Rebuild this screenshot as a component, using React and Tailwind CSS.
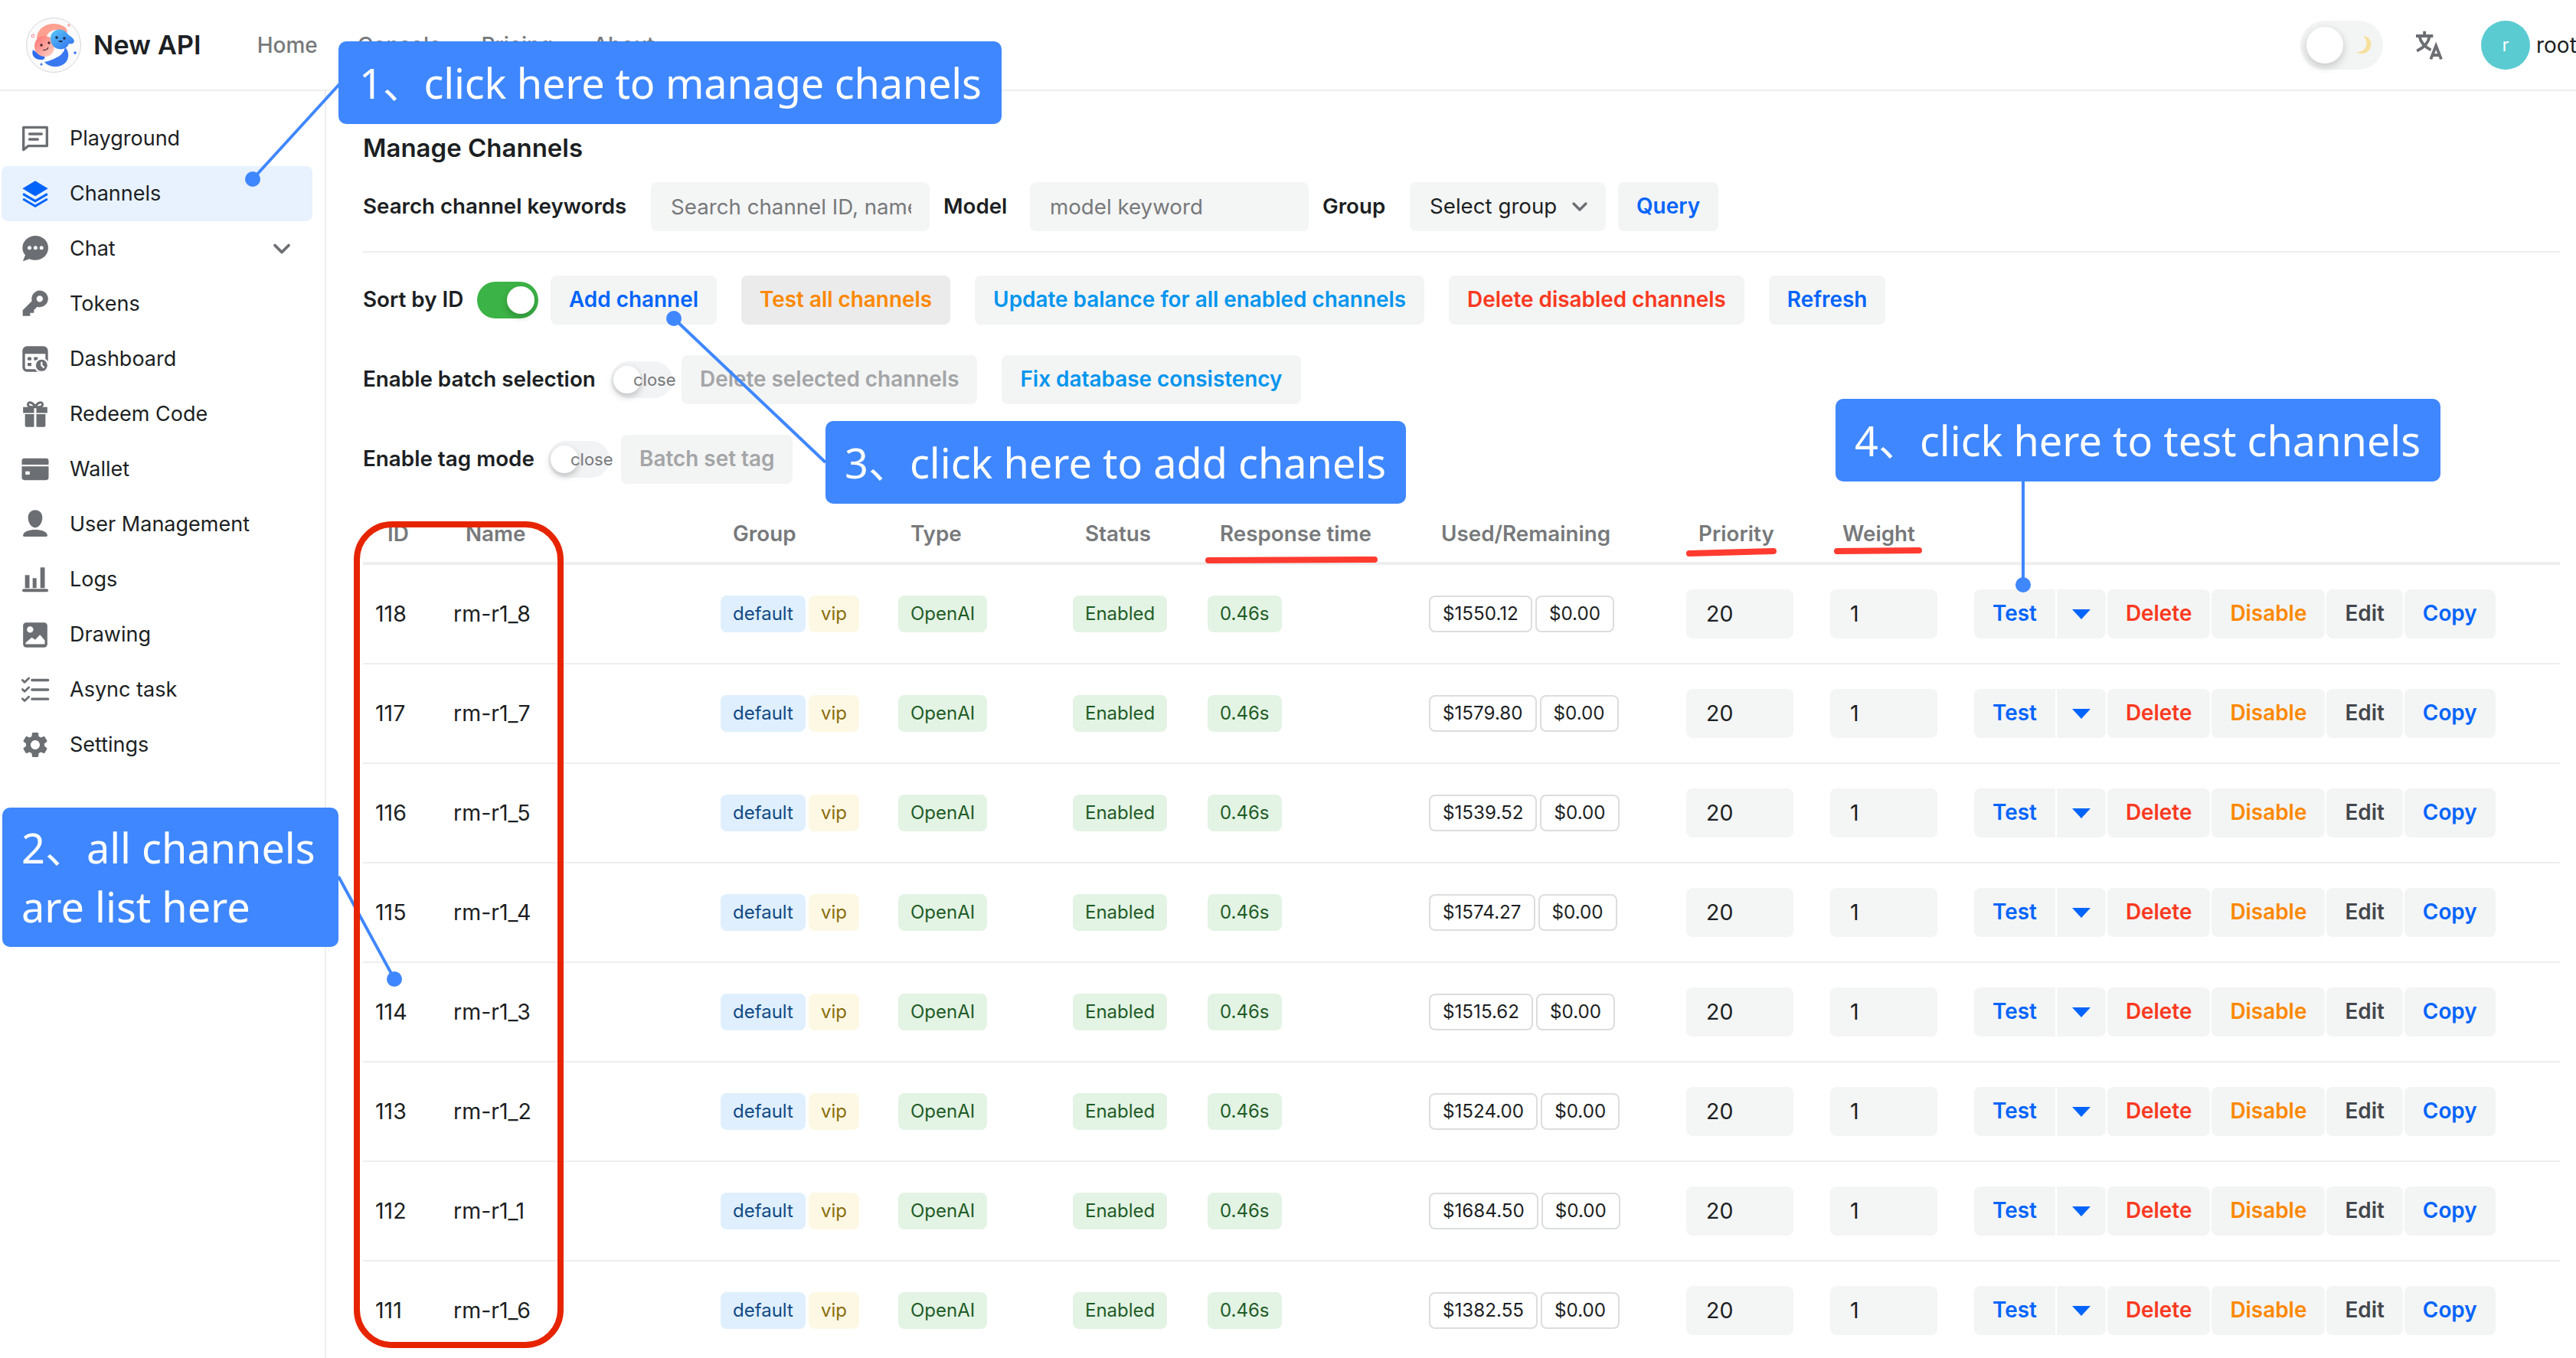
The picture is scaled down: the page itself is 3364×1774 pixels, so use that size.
import { ChevronDown } from 'lucide-react'
import { MdSettings } from 'react-icons/md'

const channels = [
  { id: 118, name: 'rm-r1_8', used: '$1550.12' },
  { id: 117, name: 'rm-r1_7', used: '$1579.80' },
  { id: 116, name: 'rm-r1_5', used: '$1539.52' },
  { id: 115, name: 'rm-r1_4', used: '$1574.27' },
  { id: 114, name: 'rm-r1_3', used: '$1515.62' },
  { id: 113, name: 'rm-r1_2', used: '$1524.00' },
  { id: 112, name: 'rm-r1_1', used: '$1684.50' },
  { id: 111, name: 'rm-r1_6', used: '$1382.55' },
]

const Svg = ({ children }) => (
  <svg viewBox="0 0 24 24" className="h-10 w-10 shrink-0 text-[#6b6e72]" fill="currentColor">
    {children}
  </svg>
)

const menu = [
  {
    label: 'Playground',
    icon: (
      <Svg>
        <path d="M2.800 3.200h18.400v14.600H6.400l-3.600 3z" fill="none" stroke="currentColor" strokeWidth="2" strokeLinejoin="round" />
        <path d="M7.500 8.400h9.500M7.500 12.600h6.500" fill="none" stroke="currentColor" strokeWidth="2" strokeLinecap="round" />
      </Svg>
    ),
  },
  {
    label: 'Channels',
    active: true,
    icon: (
      <svg viewBox="0 0 24 24" className="h-10 w-10 shrink-0 text-[#0064fa]" fill="currentColor">
        <path d="M12 2 22 8 12 14 2 8z" />
        <path d="M2.500 12.200 12 17.800l9.500-5.600M2.500 16.200 12 21.800l9.500-5.600" fill="none" stroke="currentColor" strokeWidth="1.800" />
      </svg>
    ),
  },
  {
    label: 'Chat',
    chevron: true,
    icon: (
      <Svg>
        <path d="M12.200 1.800C6.600 1.800 2 6 2 11.200c0 2.200.8 4.200 2.200 5.800L2.300 21.800l5.200-1.800c1.400.6 3 .9 4.700.9 5.600 0 10-4.200 10-9.600S17.800 1.800 12.200 1.800z" />
        <circle cx="7.500" cy="11.200" r="1.500" fill="#fff" />
        <circle cx="12.200" cy="11.200" r="1.500" fill="#fff" />
        <circle cx="16.900" cy="11.200" r="1.500" fill="#fff" />
      </Svg>
    ),
  },
  {
    label: 'Tokens',
    icon: (
      <Svg>
        <path
          fillRule="evenodd"
          d="M15.500 1.500a6.500 6.500 0 1 1-1.900 12.700L11 16.800V19H8v2.500H2.200V17l7.200-7.200A6.500 6.500 0 0 1 15.500 1.500zm0 4a2.500 2.500 0 1 0 0 5 2.500 2.500 0 0 0 0-5z"
        />
      </Svg>
    ),
  },
  {
    label: 'Dashboard',
    icon: (
      <Svg>
        <rect x="3" y="3" width="18" height="18" rx="2.500" fill="none" stroke="currentColor" strokeWidth="2" />
        <path d="M3 4.500A2.500 2.500 0 0 1 5 3h14a2.500 2.500 0 0 1 2 1.500V8H3z" />
        <rect x="6" y="10.500" width="3" height="2.500" rx=".5" />
        <rect x="11" y="10.500" width="3" height="2.500" rx=".5" />
        <rect x="6" y="15" width="3" height="2.500" rx=".5" />
        <circle cx="17" cy="17" r="5.200" stroke="#fff" strokeWidth="1.400" />
        <path d="M17 14.200V17l2 1.800" fill="none" stroke="#fff" strokeWidth="1.300" />
      </Svg>
    ),
  },
  {
    label: 'Redeem Code',
    icon: (
      <Svg>
        <path d="M12 6.500C10.500 2.500 6.300 1.800 6.300 4.300S9.500 6.500 12 6.500zM12 6.500c1.500-4 5.700-4.700 5.700-2.200S14.500 6.500 12 6.500z" fill="none" stroke="currentColor" strokeWidth="1.800" />
        <path d="M2.500 6.500h8.600v4.600H2.500zM12.900 6.500h8.600v4.600h-8.600zM4 12h7.100v10H5a1 1 0 0 1-1-1zM12.900 12H20v9a1 1 0 0 1-1 1h-6.100z" />
      </Svg>
    ),
  },
  {
    label: 'Wallet',
    icon: (
      <Svg>
        <path d="M1.500 8.400V5.500a2 2 0 0 1 2-2h17a2 2 0 0 1 2 2v2.900z" />
        <path fillRule="evenodd" d="M1.500 9.700h21V18.500a2 2 0 0 1-2 2h-17a2 2 0 0 1-2-2zM4.300 13.600v2.600h3.400v-2.600z" />
      </Svg>
    ),
  },
  {
    label: 'User Management',
    icon: (
      <Svg>
        <path d="M12 .8c3.400 0 5.600 2.600 5.600 6 0 3.700-2.300 7.800-5.600 7.800S6.400 10.500 6.400 6.800c0-3.400 2.200-6 5.600-6z" />
        <path d="M2.500 20.200c.6-2.500 4.400-4 9.500-4s8.900 1.500 9.500 4c.2.900-.4 1.400-1.200 1.400H3.700c-.8 0-1.400-.5-1.200-1.400z" />
      </Svg>
    ),
  },
  {
    label: 'Logs',
    icon: (
      <Svg>
        <path d="M4 8.500h3.500v10.300H4zM10 11h3v7.800h-3zM16 2.500h3.500v16.300H16z" />
        <rect x="1.800" y="19.300" width="20.400" height="2.400" rx="1.200" />
      </Svg>
    ),
  },
  {
    label: 'Drawing',
    icon: (
      <Svg>
        <rect x="2.500" y="2.500" width="19" height="19.500" rx="2.500" />
        <circle cx="8" cy="8" r="2.500" fill="#fff" />
        <path d="M4.500 19.500v-1.200l4.800-4 2.700 1.800 3.700-4 3.800 4.400v3z" fill="#fff" />
      </Svg>
    ),
  },
  {
    label: 'Async task',
    icon: (
      <Svg>
        <path
          d="M2 4.500l1.700 1.700L7 3M2 11.700l1.700 1.700L7 10.200M2 19l1.700 1.700L7 17.500"
          fill="none"
          stroke="currentColor"
          strokeWidth="1.700"
          strokeLinecap="round"
          strokeLinejoin="round"
        />
        <path d="M9.500 4.500h12.500M9.500 12h12.500M9.500 19.300h12.500" fill="none" stroke="currentColor" strokeWidth="2" strokeLinecap="round" />
      </Svg>
    ),
  },
  {
    label: 'Settings',
    icon: <MdSettings className="h-10 w-10 shrink-0 text-[#6b6e72]" />,
  },
]

function Logo() {
  return (
    <svg viewBox="0 0 72 72" className="h-[72px] w-[72px] shrink-0">
      <defs>
        <linearGradient id="pinkFace" x1="0" y1="0" x2="1" y2="1">
          <stop offset="0" stopColor="#ff6f6f" />
          <stop offset="1" stopColor="#ffd5c8" />
        </linearGradient>
        <linearGradient id="blueFace" x1="0" y1="0" x2="1" y2="1">
          <stop offset="0" stopColor="#59c8f7" />
          <stop offset="1" stopColor="#2f6df0" />
        </linearGradient>
      </defs>
      <circle cx="36" cy="36" r="35.500" fill="#fbfbfc" stroke="#c9cbcf" strokeWidth="0.800" />
      <path d="M14 28C14 10 36 3 50 12c3 2 5 6 3 8-8-6-22-6-26 4z" fill="#ffa090" />
      <path d="M9 42c-3 8 4 14 12 13 5 0 4-7 1-8-5 1-9-2-13-5z" fill="#2f6df0" />
      <path d="M24 58c8 9 25 8 30-3 3-7 0-14-3-16-2 6-8 15-27 19z" fill="#3a78f0" />
      <path d="M26 50c8 6 20 2 24-8-3-3-20 2-24 8z" fill="#ffffff" />
      <path d="M11 38c0-9 6-14 13-14 8 0 13 5 13 13 0 9-5 14-12 14S11 46 11 38z" fill="url(#pinkFace)" />
      <path d="M32 27c0-8 8-13 15-11 5 1 7 5 9 7 3 2 9 6 6 10-2 2-5 1-6 1-2 6-8 8-13 7-7-1-11-7-11-14z" fill="url(#blueFace)" />
      <circle cx="40" cy="26" r="1.800" fill="#1f2a44" />
      <circle cx="50" cy="27" r="1.800" fill="#1f2a44" />
      <path d="M42 30c2 3 5 3 6 0z" fill="#1f2a44" />
      <circle cx="20" cy="36" r="1.700" fill="#4a2430" />
      <circle cx="30" cy="33" r="1.700" fill="#4a2430" />
      <path d="M22 42c3 1 6 0 7-3" fill="none" stroke="#4a2430" strokeWidth="1.200" />
      <circle cx="9" cy="24" r="1.800" fill="none" stroke="#f59aa0" strokeWidth="1.200" />
      <circle cx="56" cy="10" r="1.800" fill="#f5a9a9" />
      <circle cx="64" cy="46" r="1.800" fill="#3f74ea" />
      <circle cx="20" cy="61" r="1.500" fill="#3f74ea" />
    </svg>
  )
}

function Switch({ on, label, className = '' }) {
  return (
    <div
      className={`relative h-12 w-20 shrink-0 rounded-full ${on ? 'bg-[#3bb346]' : 'bg-[#f2f3f4]'} ${className}`}
    >
      <span
        className={`absolute top-1.5 h-9 w-9 rounded-full bg-white shadow-[0_4px_10px_rgba(0,0,0,0.22)] ${on ? 'left-[39px]' : 'left-[3px]'}`}
      />
      {label && (
        <span className="absolute left-[29px] top-0 text-[22px] leading-[48px] text-[#77797b]">{label}</span>
      )}
    </div>
  )
}

function Btn({ color, bg = 'bg-[#f3f4f4]', children, className = '' }) {
  return (
    <button className={`flex h-16 shrink-0 items-center rounded-lg px-6 text-[27.9px] font-semibold ${bg} ${color} ${className}`}>
      {children}
    </button>
  )
}

function Tag({ className, children }) {
  return (
    <span className={`flex h-12 items-center rounded-lg px-4 text-[24px] ${className}`}>{children}</span>
  )
}

function Amount({ children }) {
  return (
    <span className="flex h-12 items-center rounded-lg border-2 border-[#dcdddd] bg-white px-4 text-[24.2px] text-[#1c1f23]">
      {children}
    </span>
  )
}

const columns = 'grid grid-cols-[102px_349px_232px_228px_176px_289px_336px_188px_188px_1fr] items-center'

function Row({ row }) {
  return (
    <div className={`${columns} h-[130px] border-b-2 border-[#eeeeef] pl-4 text-[28.5px] text-[#1c1f23]`}>
      <span>{row.id}</span>
      <span>{row.name}</span>
      <div className="flex gap-1">
        <Tag className="bg-[#dfeffd] text-[#124a84]">default</Tag>
        <Tag className="bg-[#fdf8e4] text-[#8a6d0b]">vip</Tag>
      </div>
      <div className="flex">
        <Tag className="bg-[#e3f3e4] text-[#1f5c27]">OpenAI</Tag>
      </div>
      <div className="flex">
        <Tag className="bg-[#e3f3e4] text-[#1f5c27]">Enabled</Tag>
      </div>
      <div className="flex">
        <Tag className="bg-[#e3f3e4] text-[#1f5c27]">0.46s</Tag>
      </div>
      <div className="flex gap-1">
        <Amount>{row.used}</Amount>
        <Amount>$0.00</Amount>
      </div>
      <div className="flex h-16 w-[140px] items-center rounded-lg bg-[#f4f5f5] pl-[26px]">20</div>
      <div className="flex h-16 w-[140px] items-center rounded-lg bg-[#f4f5f5] pl-[26px]">1</div>
      <div className="flex gap-0.5">
        <Btn color="text-[#0064fa]" className="rounded-r-none">Test</Btn>
        <button className="flex h-16 w-16 items-center justify-center rounded-r-lg bg-[#f3f4f4]">
          <span className="h-0 w-0 border-x-[12px] border-t-[13px] border-x-transparent border-t-[#0064fa]" />
        </button>
        <Btn color="text-[#f93920]">Delete</Btn>
        <Btn color="text-[#fc8800]">Disable</Btn>
        <Btn color="text-[#43474c]">Edit</Btn>
        <Btn color="text-[#0064fa]">Copy</Btn>
      </div>
    </div>
  )
}

function Callout({ className, children }) {
  return (
    <div
      className={`absolute flex items-center whitespace-nowrap rounded-[10px] bg-[#3f87ff] text-[54px] leading-[77px] text-white font-['Noto_Sans','Noto_Sans_CJK_SC',sans-serif] ${className}`}
    >
      {children}
    </div>
  )
}

export default function App() {
  return (
    <div className="relative h-[1774px] w-[3364px] overflow-hidden bg-white text-[#1c1f23] font-['Inter',sans-serif]">
      {/* top bar */}
      <header className="flex h-[119px] items-center border-b-2 border-[#eeeeef] pl-[34px]">
        <Logo />
        <span className="ml-[16px] text-[34.5px] font-semibold">New API</span>
        <nav className="ml-[73px] flex gap-[52px] text-[28px] font-medium text-[#77797b]">
          <span>Home</span>
          <span>Console</span>
          <span>Pricing</span>
          <span>About</span>
        </nav>
        <div className="ml-auto flex items-center">
          <div className="relative h-16 w-[108px] rounded-full bg-[#f3f4f4]">
            <span className="absolute left-2 top-2 h-12 w-12 rounded-full bg-white shadow-[0_4px_12px_rgba(0,0,0,0.2)]" />
            <svg viewBox="0 0 24 24" className="absolute left-[66px] top-[18px] h-7 w-7">
              <path d="M14 1.500c7 1 10 7.500 8 13-2.200 6-9.500 9-16 5.500 6.500 0 11-3.500 11.500-9 .3-3.500-1.500-7-3.500-9.500z" fill="#f6e09c" />
            </svg>
          </div>
          <svg viewBox="0 0 24 24" className="ml-[40px] h-10 w-10 text-[#6b6e72]" fill="none" stroke="currentColor">
            <path d="M8.500 1v3.800M1.800 4.800h13.400" strokeWidth="2.300" />
            <path d="M4.500 5c1 5 4.500 8.500 9 10.800M12.500 5c-1 5-4.500 9-10 11.500" strokeWidth="2.300" />
            <path d="M13.400 23l4.100-10.500L21.600 23M14.800 19.800h5.400" strokeWidth="2.300" />
          </svg>
          <div className="ml-[48px] flex h-16 w-16 items-center justify-center rounded-full bg-[#5bcbd2] text-[24px] text-white">
            r
          </div>
          <span className="ml-2 w-[52px] overflow-hidden whitespace-nowrap text-[28px]">root</span>
        </div>
      </header>

      <div className="flex">
        {/* sidebar */}
        <aside className="h-[1655px] w-[426px] shrink-0 border-r-2 border-[#eeeeef] pl-0.5 pt-[26px]">
          {menu.map((item) => (
            <div
              key={item.label}
              className={`flex h-[72px] w-[406px] items-center rounded-lg pl-6 text-[27px] ${item.active ? 'bg-[#e8f2fe]' : ''}`}
            >
              {item.icon}
              <span className="ml-[25px] flex-1">{item.label}</span>
              {item.chevron && <ChevronDown className="mr-[22px] h-9 w-9 text-[#6b6e72]" strokeWidth={2.5} />}
            </div>
          ))}
        </aside>

        {/* content */}
        <main className="min-w-0 flex-1 pl-[48px] pr-[21px] pt-[52px]">
          <h1 className="h-11 text-[33px] font-semibold leading-[44px]">Manage Channels</h1>

          <div className="mt-[23px] flex h-16 items-center text-[27.7px]">
            <span className="w-[376px] shrink-0 font-semibold">Search channel keywords</span>
            <input
              readOnly
              placeholder="Search channel ID, name"
              className="h-16 w-[364px] rounded-lg bg-[#f4f5f5] pl-[26px] pr-[24px] placeholder:text-[#77797b]"
            />
            <span className="ml-[18px] w-[113px] shrink-0 font-semibold">Model</span>
            <input
              readOnly
              placeholder="model keyword"
              className="h-16 w-[364px] rounded-lg bg-[#f4f5f5] pl-[26px] pr-6 placeholder:text-[#77797b]"
            />
            <span className="ml-[18px] w-[114px] shrink-0 font-semibold">Group</span>
            <div className="flex h-16 w-[256px] items-center justify-between rounded-lg bg-[#f4f5f5] pl-[26px] pr-[18px]">
              Select group
              <ChevronDown className="h-8 w-8 text-[#6b6e72]" strokeWidth={2.5} />
            </div>
            <Btn color="text-[#0064fa]" className="ml-4">Query</Btn>
          </div>

          <div className="mt-[26px] h-0.5 bg-[#eeeeef]" />

          <div className="mt-[30px] flex h-16 items-center text-[27.8px]">
            <span className="w-[149px] shrink-0 font-semibold">Sort by ID</span>
            <Switch on />
            <Btn color="text-[#0064fa]" className="ml-4">Add channel</Btn>
            <Btn color="text-[#fc8800]" bg="bg-[#ebebeb]" className="ml-8">Test all channels</Btn>
            <Btn color="text-[#0095ee]" className="ml-8">Update balance for all enabled channels</Btn>
            <Btn color="text-[#f93920]" className="ml-8">Delete disabled channels</Btn>
            <Btn color="text-[#0064fa]" className="ml-8">Refresh</Btn>
          </div>

          <div className="mt-10 flex h-16 items-center text-[27.8px]">
            <span className="w-[324px] shrink-0 font-semibold">Enable batch selection</span>
            <Switch label="close" />
            <Btn color="text-[#a4a5a7]" className="ml-[12px]">Delete selected channels</Btn>
            <Btn color="text-[#0095ee]" className="ml-8">Fix database consistency</Btn>
          </div>

          <div className="mt-10 flex h-16 items-center text-[27.8px]">
            <span className="w-[242px] shrink-0 font-semibold">Enable tag mode</span>
            <Switch label="close" />
            <Btn color="text-[#a4a5a7]" className="ml-[15px]">Batch set tag</Btn>
          </div>

          {/* table */}
          <div className={`${columns} h-[106px] border-b-4 border-[#eeeeef] pb-[20px] pl-8 pt-[45px] text-[27.8px] font-semibold text-[#77797b]`}>
            <span>ID</span>
            <span>Name</span>
            <span>Group</span>
            <span>Type</span>
            <span>Status</span>
            <span>Response time</span>
            <span>Used/Remaining</span>
            <span>Priority</span>
            <span>Weight</span>
            <span />
          </div>
          {channels.map((row) => (
            <Row key={row.id} row={row} />
          ))}
        </main>
      </div>

      {/* annotations drawn over the page */}
      <svg viewBox="0 0 3364 1774" className="pointer-events-none absolute inset-0 h-full w-full">
        <g stroke="#3f87ff" strokeWidth="4" fill="#3f87ff">
          <line x1="445" y1="108" x2="330" y2="234" />
          <line x1="442" y1="1145" x2="515" y2="1279" />
          <line x1="880" y1="416" x2="1078" y2="604" />
          <line x1="2642" y1="629" x2="2642" y2="764" />
        </g>
        <g fill="#3f87ff">
          <circle cx="330" cy="234" r="10" />
          <circle cx="515" cy="1279" r="10" />
          <circle cx="880" cy="416" r="10" />
          <circle cx="2642" cy="764" r="10" />
        </g>
        <g stroke="#ff3b30" strokeWidth="8" strokeLinecap="round">
          <line x1="1578" y1="732" x2="1795" y2="731" />
          <line x1="2206" y1="723" x2="2316" y2="720" />
          <line x1="2399" y1="720" x2="2506" y2="719" />
        </g>
      </svg>

      <div className="absolute left-[462px] top-[681px] h-[1080px] w-[274px] rounded-[50px] border-8 border-[#e62500]" />

      <Callout className="left-[442px] top-[54px] h-[108px] w-[866px] pl-[27px] tracking-[-0.2px]">1、click here to manage chanels</Callout>
      <Callout className="left-[3px] top-[1055px] h-[182px] w-[439px] pl-[25px]">
        <span>
          2、all channels
          <br />
          are list here
        </span>
      </Callout>
      <Callout className="left-[1078px] top-[550px] h-[108px] w-[758px] pl-[25px]">3、click here to add chanels</Callout>
      <Callout className="left-[2397px] top-[521px] h-[108px] w-[790px] pl-[25px]">4、click here to test channels</Callout>
    </div>
  )
}
